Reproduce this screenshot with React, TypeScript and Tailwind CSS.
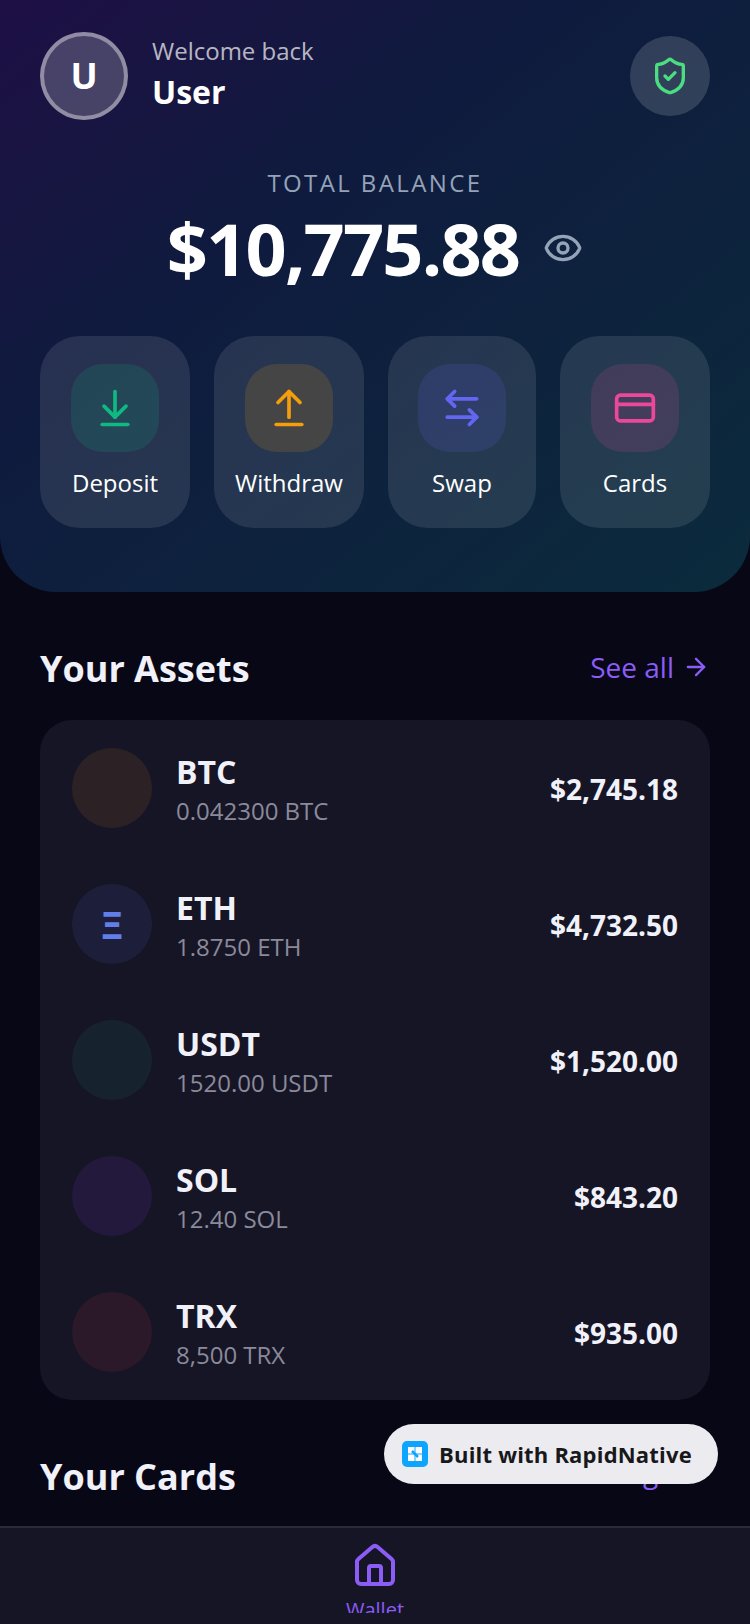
import {
  ArrowDownToLine,
  ArrowLeftRight,
  ArrowRight,
  ArrowUpFromLine,
  CreditCard,
  Eye,
  House,
  ShieldCheck,
} from "lucide-react";

const actions = [
  { label: "Deposit", Icon: ArrowDownToLine, box: "bg-[#10b981]/15", color: "text-[#10b981]" },
  { label: "Withdraw", Icon: ArrowUpFromLine, box: "bg-[#f59e0b]/15", color: "text-[#f59e0b]" },
  { label: "Swap", Icon: ArrowLeftRight, box: "bg-[#6366f1]/15", color: "text-[#6366f1]" },
  { label: "Cards", Icon: CreditCard, box: "bg-[#ec4899]/15", color: "text-[#ec4899]" },
];

const assets = [
  { symbol: "BTC", amount: "0.042300 BTC", value: "$2,745.18", circle: "bg-[#f7931a]/10", glyph: "" },
  { symbol: "ETH", amount: "1.8750 ETH", value: "$4,732.50", circle: "bg-[#627eea]/10", glyph: "Ξ" },
  { symbol: "USDT", amount: "1520.00 USDT", value: "$1,520.00", circle: "bg-[#26a17b]/10", glyph: "" },
  { symbol: "SOL", amount: "12.40 SOL", value: "$843.20", circle: "bg-[#9945ff]/10", glyph: "" },
  { symbol: "TRX", amount: "8,500 TRX", value: "$935.00", circle: "bg-[#ef4444]/10", glyph: "" },
];

export default function App() {
  return (
    <div className="relative flex h-[1624px] w-[750px] flex-col overflow-hidden bg-[#080716] font-['Open_Sans',sans-serif]">
      <div className="min-h-0 flex-1 overflow-hidden">
        <div className="h-[592px] rounded-b-[56px] bg-gradient-to-br from-[#1e0f45] from-0% via-[#0f1a3e] via-35% to-[#0b2b3c] to-100% px-10 pt-8">
          <div className="flex items-center justify-between">
            <div className="flex items-center gap-6">
              <div className="flex h-[88px] w-[88px] items-center justify-center rounded-full border-4 border-white/40 bg-white/20">
                <span className="text-[36px] font-bold text-white">U</span>
              </div>
              <div className="pb-[5px]">
                <div className="text-[24px] leading-[36px] text-white/70">Welcome back</div>
                <div className="mt-px text-[32px] leading-[44px] font-bold text-white">User</div>
              </div>
            </div>
            <div className="flex h-20 w-20 items-center justify-center rounded-full bg-white/15">
              <ShieldCheck size={40} className="text-[#4ade80]" />
            </div>
          </div>

          <div className="mt-[45px] text-center text-[24px] leading-[36px] tracking-[2.4px] text-[#94a3b8]">
            TOTAL BALANCE
          </div>
          <div className="mt-[5px] flex items-center justify-center gap-6">
            <span className="text-[72px] leading-[84px] font-bold tracking-[-1.8px] text-white">$10,775.88</span>
            <Eye size={40} className="text-[#94a3b8]" />
          </div>

          <div className="mt-[46px] grid grid-cols-[150px_150px_148px_150px] gap-6">
            {actions.map(({ label, Icon, box, color }) => (
              <div key={label} className="flex h-[192px] flex-col items-center rounded-[40px] bg-white/10 pt-7">
                <div className={`flex h-[88px] w-[88px] items-center justify-center rounded-[32px] ${box}`}>
                  <Icon size={44} className={color} />
                </div>
                <div className="mt-3 text-[24px] leading-[38px] text-white">{label}</div>
              </div>
            ))}
          </div>
        </div>

        <div className="mt-[47px] flex items-center justify-between px-10">
          <h2 className="text-[36px] leading-[60px] font-bold text-[#f1f1fa]">Your Assets</h2>
          <div className="flex items-center gap-2 pb-1 text-[#8b5cf6]">
            <span className="text-[28px] leading-[40px]">See all</span>
            <ArrowRight size={28} />
          </div>
        </div>

        <div className="mx-10 mt-[21px] rounded-[32px] bg-[#161526]">
          {assets.map((a) => (
            <div key={a.symbol} className="flex h-[136px] items-center px-8">
              <div className={`flex h-20 w-20 items-center justify-center rounded-full ${a.circle}`}>
                <span className="text-[38px] font-bold text-[#627eea]">{a.glyph}</span>
              </div>
              <div className="ml-6 flex-1 pt-0.5">
                <div className="text-[32px] leading-[44px] font-bold text-[#f1f1fa]">{a.symbol}</div>
                <div className="text-[24px] leading-[34px] text-[#8a8a9a]">{a.amount}</div>
              </div>
              <div className="pt-0.5 text-[28px] font-bold text-[#f1f1fa]">{a.value}</div>
            </div>
          ))}
        </div>

        <div className="mt-[47px] flex items-center justify-between px-10">
          <h2 className="text-[36px] leading-[60px] font-bold text-[#f1f1fa]">Your Cards</h2>
          <div className="flex items-center gap-2 pb-[10px] text-[#8b5cf6]">
            <span className="text-[28px] leading-[40px]">Manage</span>
            <ArrowRight size={28} />
          </div>
        </div>
      </div>

      <div className="h-[98px] shrink-0 border-t-2 border-[#2a2a3a] bg-[#161526]">
        <div className="flex h-[85px] flex-col items-center overflow-hidden pt-[14px]">
          <House size={48} className="shrink-0 text-[#8b5cf6]" />
          <span className="mt-[5px] text-[20px] leading-[30px] text-[#8b5cf6]">Wallet</span>
        </div>
      </div>

      <div className="absolute top-[1424px] left-[384px] flex h-[60px] w-[334px] items-center gap-[11px] rounded-full bg-[#ececf0] pl-[18px]">
        <svg width="26" height="26" viewBox="0 0 26 26">
          <rect width="26" height="26" rx="5" fill="#0ea5ff" />
          <rect x="6" y="6" width="6.5" height="6.5" fill="#fff" />
          <rect x="13.5" y="6" width="6.5" height="6.5" fill="#fff" />
          <rect x="6" y="13.5" width="6.5" height="6.5" fill="#fff" />
          <rect x="13.5" y="13.5" width="6.5" height="6.5" fill="#fff" />
          <path d="M10 10 16 16" stroke="#0ea5ff" strokeWidth="2.5" />
        </svg>
        <span className="text-[22px] font-bold tracking-[0.2px] text-[#18181b]">Built with RapidNative</span>
      </div>
    </div>
  );
}
